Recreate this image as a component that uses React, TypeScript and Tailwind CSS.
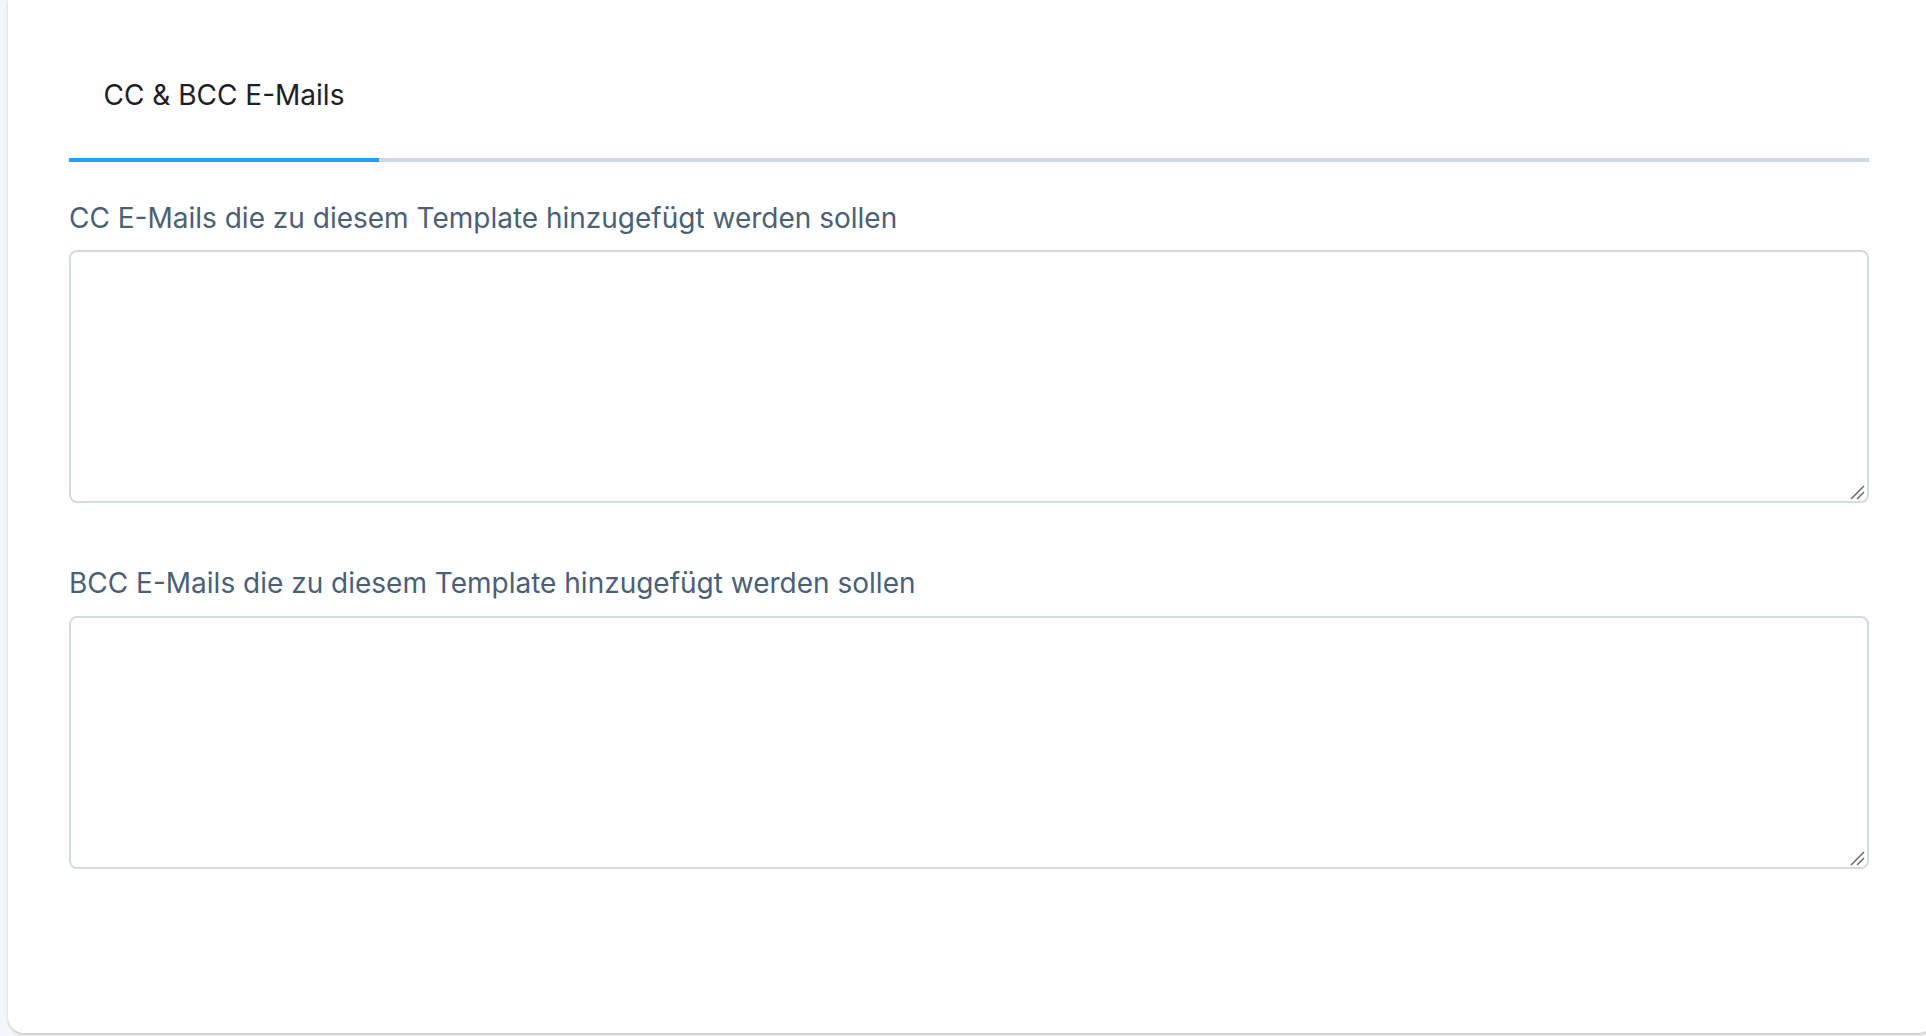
import React from "react";

function Area({ className }: { className: string }) {
  return (
    <div className={"relative w-full " + className}>
      <textarea className="block h-full w-full rounded-[8px] border-2 border-[#d2dbe4] resize-none outline-none" />
      <svg
        className="absolute right-[2px] bottom-[2px] pointer-events-none"
        width="18"
        height="18"
        viewBox="0 0 18 18"
      >
        <line x1="2" y1="16" x2="15" y2="3" stroke="#6e6e6e" strokeWidth="1.6" />
        <line x1="8" y1="16" x2="15" y2="9" stroke="#6e6e6e" strokeWidth="1.6" />
      </svg>
    </div>
  );
}

export default function App() {
  return (
    <div
      className="w-full h-[1036px] overflow-hidden bg-[#f5f6f8]"
      style={{ fontFamily: "Inter, 'Noto Sans', sans-serif" }}
    >
      <div className="ml-[8px] mr-[-8px] h-[1033px] bg-white rounded-b-[16px] shadow-[0_2px_3px_rgba(0,0,0,0.18)] px-[61px] pb-[165px] flex flex-col">
        <div className="mt-[74px] flex border-b-4 border-[#d0d8e0] w-[1800px]">
          <button className="-mb-[4px] border-b-4 border-[#1d9ff6] w-[310px] pb-[42px] text-[28px] leading-[42px] text-[#1b2027] text-center">
            CC &amp; BCC E-Mails
          </button>
        </div>
        <div className="w-[1800px] flex flex-col">
          <label className="mt-[35px] text-[28px] leading-[42px] text-[#4b5f76]">
            CC E-Mails die zu diesem Template hinzugefügt werden sollen
          </label>
          <Area className="mt-[11px] h-[253px]" />
          <label className="mt-[59px] text-[28px] leading-[42px] text-[#4b5f76]">
            BCC E-Mails die zu diesem Template hinzugefügt werden sollen
          </label>
          <Area className="mt-[12px] h-[253px]" />
        </div>
      </div>
    </div>
  );
}
